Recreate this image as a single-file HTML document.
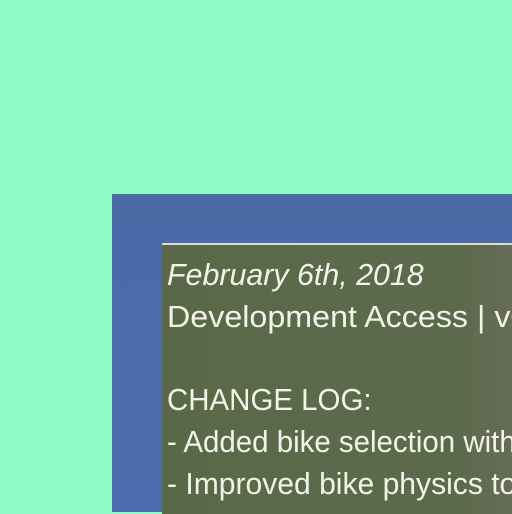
<!DOCTYPE html>
<html><head><style>
html,body{margin:0;padding:0;width:512px;height:512px;overflow:hidden;background:#8ffcc5;}
.blue{position:absolute;left:112px;top:194px;width:400px;height:318px;background:linear-gradient(180deg,#4c6aa6,#4a6cae);}
.green{position:absolute;left:162px;top:243px;width:350px;height:269px;overflow:hidden;background:linear-gradient(90deg,#596947,#5c6a4c 85%,#666c56);border-top:2px solid #d8dcd0;}
.t{position:absolute;left:5px;color:#f2f2ea;font-family:"Liberation Sans",sans-serif;font-size:31px;white-space:nowrap;transform-origin:0 0;transform:scaleX(1.04);}
</style></head><body>
<div class="blue"></div>
<div class="green">
<div class="t" style="top:12px;font-style:italic;transform:scaleX(0.98);">February 6th, 2018</div>
<div class="t" style="top:54px;">Development Access | v0.3</div>
<div class="t" style="top:137px;transform:scaleX(0.95);">CHANGE LOG:</div>
<div class="t" style="top:179px;transform:scaleX(0.95);">- Added bike selection with</div>
<div class="t" style="top:221px;transform:scaleX(0.97);">- Improved bike physics to</div>
</div>
</body></html>
